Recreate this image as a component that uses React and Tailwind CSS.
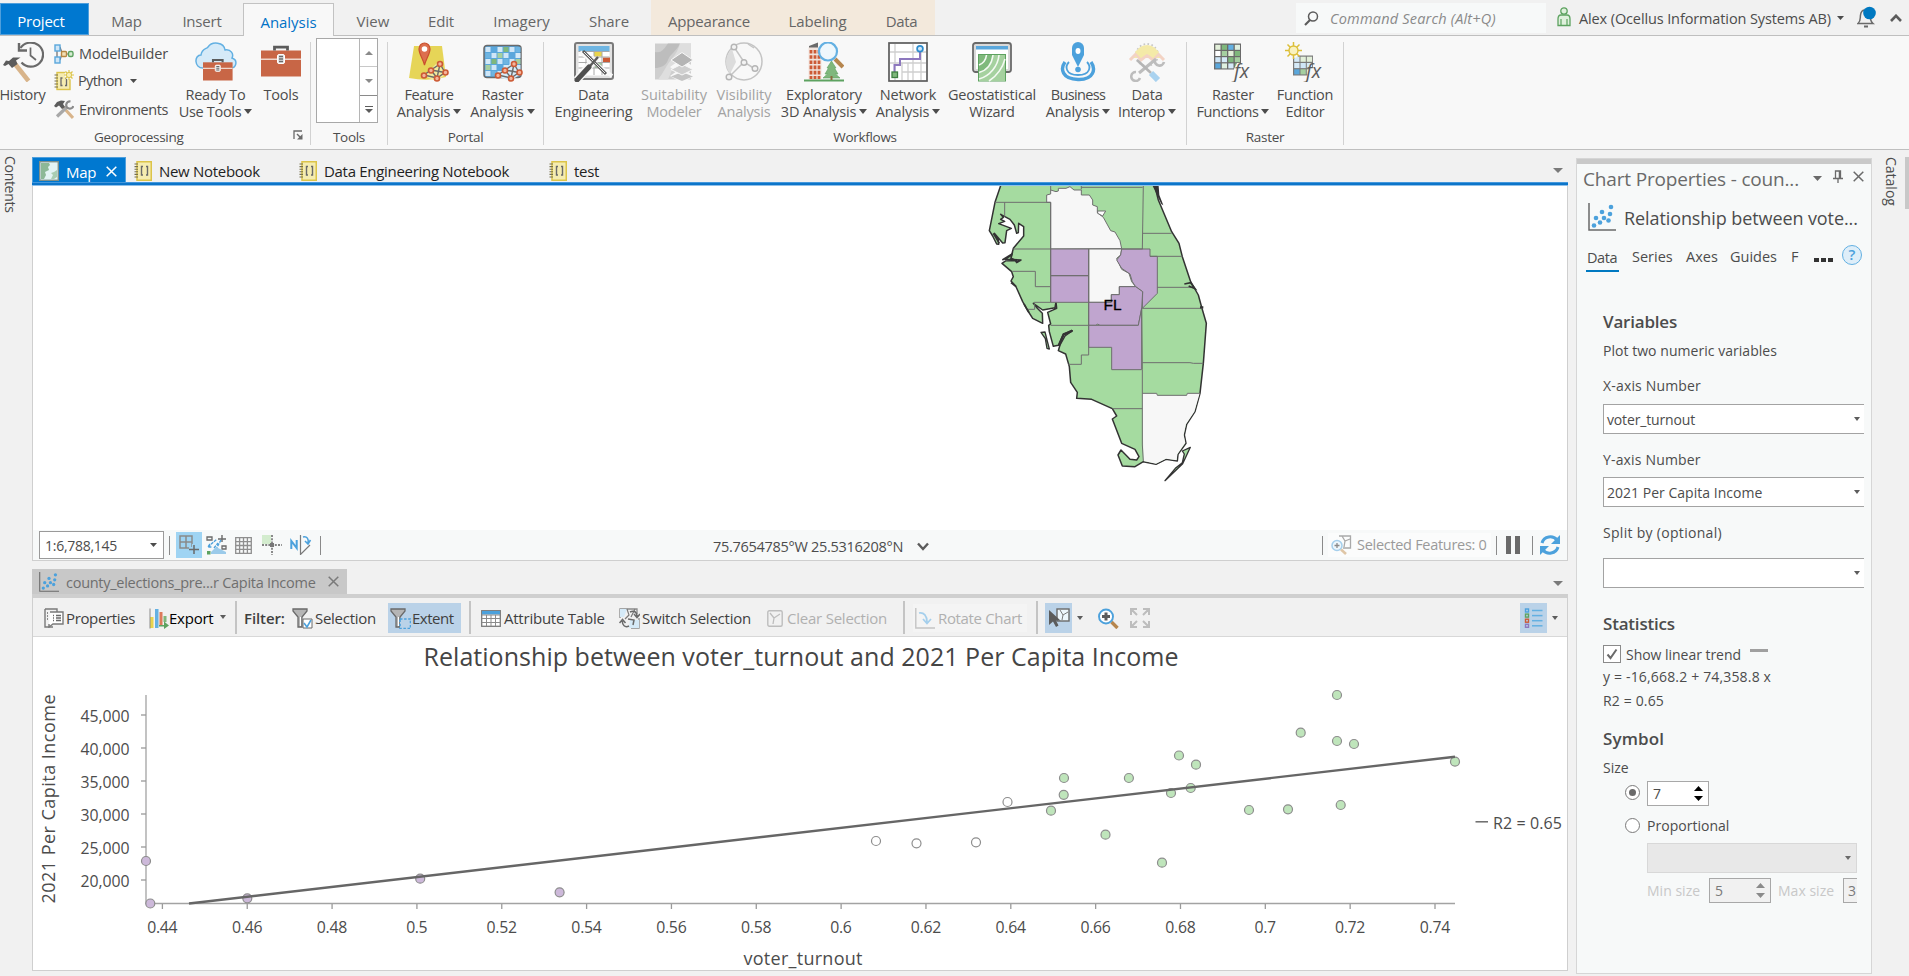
import React from "react";

/* ---------- small shared pieces ---------- */

const Caret = ({ className = "", w = 9, h = 5 }) => (
  <svg className={`inline-block shrink-0 ${className}`} width={w} height={h} viewBox="0 0 10 6" preserveAspectRatio="none" fill="currentColor">
    <path d="M0 0H10L5 6Z" />
  </svg>
);

const CloseX = ({ className = "", size = 11 }) => (
  <svg className={`shrink-0 ${className}`} width={size} height={size} viewBox="0 0 11 11" fill="none" stroke="currentColor" strokeWidth="1.5">
    <path d="M.7.7 10.3 10.3M10.3.7.7 10.3" />
  </svg>
);

const Svg = ({ w, h, children, className = "", vb }) => (
  <svg className={`shrink-0 ${className}`} width={w} height={h} viewBox={vb || `0 0 ${w} ${h}`} fill="none">
    {children}
  </svg>
);

/* ---------- ribbon icons ---------- */

const HistoryIcon = () => (
  <Svg w={42} h={40}>
    <path d="M18.500 6A12.300 12 0 1 1 19.500 20.500" stroke="#6a6a6a" strokeWidth="2.200" />
    <path d="M17 1V8.500H25" stroke="#6a6a6a" strokeWidth="2.400" />
    <path d="M28.500 5.500V13.500L34 18" stroke="#6a6a6a" strokeWidth="1.700" />
    <path d="M11.500 20 26.500 39" stroke="#d8b48a" strokeWidth="4.600" />
    <path d="M1 23 4 18.500 7 19 11 15.500 18.500 15.500 14 18.500 15.500 22 10 26 6.500 22 3 24Z" fill="#5c5c5c" />
  </Svg>
);
const ModelBuilderIcon = () => (
  <Svg w={20} h={20}>
    <path d="M3 7V13M6 3 8 9M6 16 8 10M11 10H15" stroke="#6a6a6a" strokeWidth="1.200" />
    <rect x="1" y="1" width="5" height="6" fill="#cfe6f7" stroke="#5aa7dc" strokeWidth="1.400" />
    <rect x="1" y="13" width="5" height="6" fill="#cfe6f7" stroke="#5aa7dc" strokeWidth="1.400" />
    <rect x="7.500" y="7.500" width="5" height="5" rx="1" fill="#f3dfb4" stroke="#b68742" strokeWidth="1.400" />
    <rect x="14.500" y="7.500" width="4.500" height="5" rx="1.500" fill="#d6edd2" stroke="#5da260" strokeWidth="1.400" />
  </Svg>
);
const NotebookIcon = () => (
  <Svg w={18} h={20}>
    <rect x="3" y="0.750" width="14.250" height="18.500" fill="#f5ecb0" stroke="#dcc44a" strokeWidth="1.500" />
    <path d="M0.500 3H4M0.500 5.600H4M0.500 8.200H4M0.500 10.800H4M0.500 13.400H4M0.500 16H4" stroke="#77704a" strokeWidth="1.100" />
    <path d="M9 5.500H7.500V14H9M12 5.500H13.500V14H12" stroke="#6a6a6a" strokeWidth="1.400" />
  </Svg>
);
const PythonIcon = () => (
  <Svg w={20} h={21}>
    <rect x="3" y="2.500" width="13" height="17" fill="#f5ecb0" stroke="#dcc44a" strokeWidth="1.400" />
    <path d="M0.500 5H4M0.500 8H4M0.500 11H4M0.500 14H4M0.500 17H4" stroke="#77704a" strokeWidth="1.100" />
    <path d="M8.500 8H7V15.500H8.500M11 8H12.500V15.500H11" stroke="#6a6a6a" strokeWidth="1.300" />
    <circle cx="15" cy="5" r="4.600" fill="#f8f8f8" />
    <path d="M15 0V10M10 5H20M11.500 1.500 18.500 8.500M18.500 1.500 11.500 8.500" stroke="#dcc44a" strokeWidth="1.200" />
    <circle cx="15" cy="5" r="2.600" fill="#f7efb8" stroke="#dcc44a" />
  </Svg>
);
const EnvironmentsIcon = () => (
  <Svg w={20} h={19}>
    <path d="M9 7 19 18" stroke="#d8b48a" strokeWidth="3" />
    <path d="M3 16.500 13 7" stroke="#a8a8a8" strokeWidth="3.200" />
    <path d="M16.500 1.500A3.600 3.600 0 1 0 19.300 6" stroke="#8a8a8a" strokeWidth="2.200" />
    <path d="M0 6 3 2 7 0.500 11 1 9 4 11 7 8 9 5 5.500 2 7.500Z" fill="#5c5c5c" />
  </Svg>
);
const Toolbox = () => (
  <>
    <path d="M0 4H40V30H0Z" fill="#c86646" />
    <path d="M0 12.700H16M24 12.700H40" stroke="#efd6cb" strokeWidth="1.500" />
    <path d="M13.500 4V0.700H26.500V4" stroke="#5c5c5c" strokeWidth="2.800" />
    <rect x="16.500" y="8" width="7" height="9" rx="1.500" fill="#e6e6e6" stroke="#fff" />
    <path d="M18 10H22M18 12.500H22M18 15H22" stroke="#6a6a6a" strokeWidth="1.500" />
  </>
);
const ToolboxIcon = () => <Svg w={40} h={40} vb="0 -4.500 40 40"><Toolbox /></Svg>;
const ReadyIcon = () => (
  <Svg w={42} h={40}>
    <path d="M8 26C-1 26-1 13 6 13C7 6 12 7 13 5C17-1 29 0 30 8C36 7 39 12 37 16C43 18 42 27 34 26Z" fill="#d5eaf8" stroke="#63b0e2" strokeWidth="1.500" />
    <g transform="translate(8 17.500) scale(.74 .7)"><Toolbox /></g>
  </Svg>
);
const NetNodes = () => (
  <>
    <path d="M15 33 22 28 31 22 36 30.500 28 36 15 33M22 28 28 36M31 22 28 36M22 28 36 30.500" stroke="#6a6a6a" strokeWidth="1.400" />
    {[[15, 33.500], [22, 28.500], [31, 22], [36.500, 30.500], [28, 36.500]].map(([x, y]) => (
      <circle key={x} cx={x} cy={y} r="2.500" fill="#f4b49b" stroke="#cc5a35" strokeWidth="1.600" />
    ))}
  </>
);
const FeatureIcon = () => (
  <Svg w={40} h={40}>
    <path d="M5 4H33L37 35Q20 40 0 36Z" fill="#e6d557" />
    <path d="M15 34 30 19 38 32 27 39Z" fill="#f3ea9d" />
    <path d="M15.500 23C14 17 10 12 10 7A5.500 6 0 0 1 21 7C21 12 17 17 15.500 23Z" fill="#dd6f4e" stroke="#c9512e" strokeWidth="1.200" />
    <circle cx="15.500" cy="7" r="2.800" fill="#fff" />
    <NetNodes />
  </Svg>
);
const GRID_COLORS = ["#cfe6f7", "#6eb5e2", "#d5eaf8", "#a6cf9f", "#cfe6f7", "#5aa7dc", "#cfe6f7", "#7fb77c"];
const RasterIcon = () => (
  <Svg w={40} h={40}>
    <rect x="1" y="3.500" width="37" height="32" rx="3" fill="#5aa7dc" stroke="#6a6a6a" strokeWidth="1.500" />
    {Array.from({ length: 30 }, (_, i) => (
      <rect key={i} x={2.500 + (i % 6) * 6} y={5 + Math.floor(i / 6) * 6} width="5" height="5" fill={GRID_COLORS[(i * 5 + Math.floor(i / 6) * 3) % 8]} />
    ))}
    <path d="M14 34 30 19 38 32 27 39Z" fill="#d8ecf8" />
    <NetNodes />
  </Svg>
);
const DataEngIcon = () => (
  <Svg w={40} h={40}>
    <rect x="1" y="1" width="38" height="36" rx="2" fill="#e2e2e2" stroke="#7a7a7a" strokeWidth="2" />
    <rect x="4.500" y="4" width="31" height="5.500" fill="#6eb5e2" />
    <rect x="4.500" y="9.500" width="31" height="24" fill="#fff" />
    <rect x="20" y="10" width="8" height="4.500" fill="#e8d44d" />
    <rect x="29" y="15.500" width="7" height="5" fill="#cc5a35" />
    <rect x="21" y="21" width="7" height="5" fill="#9cc79a" />
    <path d="M4.500 9.500H35.500M4.500 15H35.500M4.500 20.500H35.500M4.500 26H35.500M12 9.500V33M20 9.500V33M28 9.500V33" stroke="#a9a9a9" strokeWidth="1" />
    <path d="M3 38 22 16" stroke="#f8f8f8" strokeWidth="8" />
    <path d="M6 10 38 34" stroke="#f8f8f8" strokeWidth="4" />
    <path d="M9 9 32 32" stroke="#5c5c5c" strokeWidth="3" />
    <path d="M10 10 31 31" stroke="#e9e9e9" strokeWidth="1" />
    <path d="M16 24 24 15" stroke="#5c5c5c" strokeWidth="2.400" />
    <path d="M3 38 15 25" stroke="#4f4f4f" strokeWidth="5" strokeLinecap="round" />
  </Svg>
);
const SuitabilityIcon = () => (
  <Svg w={40} h={40}>
    <rect x="1" y="1.500" width="36" height="36" fill="#cfcfcf" />
    <path d="M1 10C8 12 11 5 14 1.500H26C22 10 16 12 14 18C12 24 6 26 1 26Z" fill="#bdbdbd" />
    <path d="M26 1.500H37V18C30 22 22 22 18 28L14 37.500H4C10 30 12 24 17 18C22 12 24 8 26 1.500Z" fill="#dedede" />
    <path d="M28 25.500 40 34 28 41 16 34Z M28 16.500 40 25 28 33 16 25Z" fill="#f8f8f8" />
    <path d="M28 30 39 34.500 28 39 17 34.500Z" fill="#c4c4c4" />
    <path d="M28 22 39 27.500 28 33 17 27.500Z" fill="#cfcfcf" stroke="#f8f8f8" />
    <path d="M28 10.500 39 18 28 25 17 18Z" fill="#b5b5b5" stroke="#f8f8f8" />
  </Svg>
);
const VisibilityIcon = () => (
  <Svg w={40} h={40}>
    <ellipse cx="20" cy="19.500" rx="18" ry="18.500" stroke="#c4c4c4" strokeWidth="1.500" />
    <path d="M2 20C2 15 5 9 8 7L12 20 6 32C3 28 2 24 2 20Z" fill="#dcdcdc" />
    <path d="M10 5 20 20 31 27M20 20 5 35M24 2 30 6" stroke="#c4c4c4" strokeWidth="1.500" />
    {[[10, 5], [20, 20.500], [31, 26.500], [5, 35]].map(([x, y]) => (
      <circle key={x} cx={x} cy={y} r="2.800" fill="#f3f3f3" stroke="#b5b5b5" strokeWidth="1.400" />
    ))}
  </Svg>
);
const ExploratoryIcon = () => (
  <Svg w={40} h={40}>
    <path d="M5 4 14 0.500V6H5Z" fill="#6a6a6a" />
    <rect x="4.500" y="5.500" width="13" height="32" fill="#f1e4dd" />
    <path d="M7 8V37M11 8V37M15 8V37" stroke="#cc5a35" strokeWidth="2.800" strokeDasharray="3.600 1.600" />
    <path d="M0 38.500H40" stroke="#5da260" strokeWidth="2" />
    <path d="M27.500 19 32 26H30.500L34 32H31.500L36 36H19L23.500 32H21L24.500 26H23Z" fill="#7fb77c" stroke="#5da260" strokeWidth=".6" />
    <path d="M27.500 34V38" stroke="#8a6a3e" strokeWidth="2" />
    <path d="M31 17 39 25" stroke="#b6864e" strokeWidth="4" />
    <circle cx="24" cy="9.500" r="9" fill="#eef7fc" stroke="#63b0e2" strokeWidth="2.200" />
  </Svg>
);
const NetworkIcon = () => (
  <Svg w={40} h={40}>
    <rect x="1" y="1" width="38" height="38" fill="#fff" stroke="#5c5c5c" strokeWidth="1.700" />
    <path d="M2 10H38M2 21H38M14 30H38M7 2V38M14 21V38M25 2V38M33 10V38M20 21V38" stroke="#cfcfcf" strokeWidth="1.300" />
    <path d="M6.500 32V23H12V17H32V8" stroke="#8d78be" strokeWidth="2" />
    <rect x="4" y="30" width="5.500" height="5.500" fill="#7fb77c" stroke="#3f7f42" strokeWidth="1.300" />
    <circle cx="32" cy="6.800" r="2.900" fill="#cfe6f7" stroke="#2d8ccd" strokeWidth="1.700" />
  </Svg>
);
const GeostatIcon = () => (
  <Svg w={40} h={40}>
    <rect x="1" y="1" width="38" height="29" rx="2.500" fill="#d9d9d9" stroke="#6a6a6a" strokeWidth="1.800" />
    <rect x="4" y="4" width="32" height="23" fill="#fff" />
    <rect x="4" y="4" width="32" height="3.500" fill="#5aa7dc" />
    <rect x="6.500" y="12.500" width="27" height="26.500" fill="#7fb97c" stroke="#5da260" />
    <path d="M7 39V30C16 28 20 21 21 13H33V39Z" fill="#a5d19f" />
    <path d="M7 23C12 21 14 17 14.500 13M7 30.500C16 28 20 21 21 13M7 37C18 34 26 24 27 13M17 39C25 34 31 25 33 17" stroke="#f4faf3" strokeWidth="1.600" />
  </Svg>
);
const BusinessIcon = () => (
  <Svg w={36} h={40}>
    <path d="M18 25 12 13V6A6 6 0 0 1 24 6V13Z" fill="#4ca1dc" />
    <ellipse cx="18" cy="9" rx="2.500" ry="3" fill="#fff" />
    <circle cx="18" cy="27.500" r="2.800" fill="#4ca1dc" />
    <path d="M9 20C5 24 5 33 18 33S31 24 27 20" stroke="#4ca1dc" strokeWidth="1.800" />
    <path d="M5 20C0 27 2 37 18 37.500S36 27 31 20" stroke="#4ca1dc" strokeWidth="3.400" />
  </Svg>
);
const InteropIcon = () => (
  <Svg w={40} h={40}>
    <circle cx="20" cy="13" r="11" stroke="#c7c7c7" strokeWidth="1.800" strokeDasharray="1.600 2.400" />
    <path d="M9 12A11 9 0 0 1 31 12L34 16H6Z" fill="#f4eaa8" />
    <path d="M3 18 9 12 14 18 20 13 26 18 31 12 37 18" stroke="#f3d3c4" strokeWidth="3" />
    <path d="M9 9 14 14 20 10 26 14 31 9" stroke="#f4eaa8" strokeWidth="3" />
    <path d="M12 31 29 17" stroke="#bdbdbd" strokeWidth="3" />
    <path d="M9 30A4.500 4.500 0 1 0 13 36M28 18A4.500 4.500 0 1 0 37 20" stroke="#bdbdbd" strokeWidth="2.600" />
    <path d="M10 18 24 31" stroke="#b5b5b5" strokeWidth="2.600" />
    <path d="M24 31 31 38" stroke="#a9d2ef" strokeWidth="6" />
  </Svg>
);
const Fx = () => (
  <text x="21" y="36" fontFamily="Open Sans, sans-serif" fontStyle="italic" fontSize="19.500" letterSpacing="-0.300" fill="#5c5c5c">fx</text>
);
const RF_COLORS = ["#e2efd9", "#7fb77c", "#63b0e2", "#dff0e0", "#fff", "#a5cfa0", "#e2efd9", "#7fb77c", "#cfe6f7", "#d5eaf8", "#7fb77c", "#a5cfa0", "#5aa7dc", "#dff0e0", "#d5eaf8", "#7fb77c"];
const RasterFnIcon = () => (
  <Svg w={44} h={40} className="ml-1">
    <rect x="1" y="1.500" width="27" height="26" fill="#6a6a6a" />
    {RF_COLORS.map((c, i) => (
      <rect key={i} x={2.300 + (i % 4) * 6.500} y={2.800 + Math.floor(i / 4) * 6.200} width="5.200" height="5" fill={c} />
    ))}
    <path d="M21 27 24 21H29V28H21Z" fill="#f8f8f8" />
    <Fx />
  </Svg>
);
const FunctionIcon = () => (
  <Svg w={44} h={40} className="ml-1">
    <rect x="8" y="13.500" width="20" height="20" fill="#7a7a7a" />
    {["#d5eaf8", "#e2efd9", "#e2efd9", "#d5eaf8", "#cfe6f7", "#d5eaf8", "#5aa7dc", "#a5cfa0", "#dff0e0"].map((c, i) => (
      <rect key={i} x={9.200 + (i % 3) * 6.300} y={14.700 + Math.floor(i / 3) * 6.300} width="5.300" height="5.100" fill={c} />
    ))}
    <circle cx="8.500" cy="8.500" r="7.500" fill="#f8f8f8" />
    <path d="M8.500 0V17M0 8.500H17M2.500 2.500 14.500 14.500M14.500 2.500 2.500 14.500" stroke="#dcbf3a" strokeWidth="1.500" />
    <circle cx="8.500" cy="8.500" r="4.500" fill="#f9f2c0" stroke="#dcbf3a" strokeWidth="1.400" />
    <path d="M22 34 25 24 30 27V34Z" fill="#f8f8f8" />
    <Fx />
  </Svg>
);

/* ---------- ribbon ---------- */

const Tab = ({ w, children, className = "", t = "tracking-[-0.2px]" }) => (
  <div className={`flex h-8 shrink-0 items-center justify-center pt-[4px] text-[15px] ${t} ${w} ${className}`}>{children}</div>
);

const Big = ({ w, icon, l1, l2, caret, muted }) => (
  <div className={`flex shrink-0 flex-col items-center ${w} ${muted ? "text-[#a3a3a3]" : ""}`}>
    <div className="flex h-10 items-start justify-center">{icon}</div>
    <div className="mt-[4px] text-center leading-[17px] whitespace-nowrap">
      <div>{l1}</div>
      {l2 && <div>{l2}{caret && <Caret className="mb-[3px] ml-[3px] align-baseline" w={8} h={5} />}</div>}
    </div>
  </div>
);

const Group = ({ w, label, children }) => (
  <div className={`flex h-full shrink-0 flex-col border-r border-[#d2d2d2] ${w}`}>
    <div className="flex h-[87px]">{children}</div>
    <div className="pt-[5px] text-center text-[13.500px] leading-[16px] tracking-[-0.300px]">{label}</div>
  </div>
);

const Ribbon = () => (
  <>
    <div className="flex h-9 items-start border-b border-[#bfbfbf] bg-[#f1f1f1] text-[#666]">
      <div className="flex h-9 shrink-0 pt-[3px]">
        <Tab w="w-[89px]" className="border border-[#4f9fdc] bg-[#0078d0] pr-[7px] text-white">Project</Tab>
        <Tab w="w-[75px]">Map</Tab>
        <Tab w="w-[76px]">Insert</Tab>
        <div className="ml-[3px] h-[33px] w-[91px] border border-b-0 border-[#c2c2c2] bg-[#f8f8f8] text-[#0072c6]"><Tab w="w-full" t="tracking-[-0.050px]">Analysis</Tab></div>
        <Tab w="w-[78px]" t="tracking-[0.1px]">View</Tab>
        <Tab w="w-[58px]">Edit</Tab>
        <Tab w="w-[103px]" t="tracking-[0px]">Imagery</Tab>
        <Tab w="w-[72px]" t="tracking-[-0.050px]">Share</Tab>
      </div>
      <div className="ml-[6px] flex h-[35px] w-[284px] shrink-0 bg-[#f3e9dc] pt-[3px]">
        <Tab w="w-[116px]">Appearance</Tab>
        <Tab w="w-[101px]" t="tracking-[-0.1px]">Labeling</Tab>
        <Tab w="w-[67px]" t="tracking-[-0.4px]">Data</Tab>
      </div>
      <div className="mt-[3px] ml-[361px] flex h-[30px] w-[250px] shrink-0 items-center bg-[#f7f9f9] pl-[8px] text-[14.500px] tracking-[0.200px] text-[#8a8a8a] italic">
        <Svg w={15} h={15} className="mr-[11px]">
          <circle cx="9" cy="5.500" r="4.500" stroke="#5c5c5c" strokeWidth="1.500" />
          <path d="M6 9 1 14" stroke="#5c5c5c" strokeWidth="2.200" />
        </Svg>
        <span className="pt-px whitespace-nowrap">Command Search (Alt+Q)</span>
      </div>
      <div className="mt-[3px] ml-[11px] flex h-[30px] items-center text-[14.500px] tracking-[-0.120px] text-[#4c4c4c]">
        <Svg w={14} h={20} className="mb-[2px]">
          <circle cx="7" cy="4" r="3.200" fill="#dff0dc" stroke="#5da260" strokeWidth="1.300" />
          <path d="M1 12Q1 8 4 8H10Q13 8 13 12V18.500H1Z" fill="#dff0dc" stroke="#5da260" strokeWidth="1.300" />
          <path d="M4 12V18M10 12V18" stroke="#5da260" strokeWidth="1.200" />
        </Svg>
        <span className="ml-[8px] w-[258px] shrink-0 pt-px whitespace-nowrap">Alex (Ocellus Information Systems AB)</span>
        <Caret w={7} h={4} />
        <Svg w={20} h={22} className="mb-[2px] ml-[13px]">
          <path d="M1 17.500C4 15 3 12 3.500 9C4 5 6 4 8 4S12.500 5 13 9C13.300 12 13 15 16 17.500Z" stroke="#6a6a6a" strokeWidth="1.500" />
          <path d="M7 20.500H11" stroke="#6a6a6a" strokeWidth="2" />
          <circle cx="12.500" cy="7" r="6.300" fill="#0079c1" />
        </Svg>
        <Svg w={12} h={8} className="ml-[13px]"><path d="M1 7 6 1.800 11 7" stroke="#5c5c5c" strokeWidth="2.600" /></Svg>
      </div>
    </div>

    <div className="h-[114px] shrink-0 border-b border-[#bfbfbf] bg-[#f8f8f8] text-[14.500px] tracking-[-0.200px]">
      <div className="flex h-[109px] pt-[6px]">
        <Group w="w-[311px]" label={
          <div className="flex items-center pl-[94px] whitespace-nowrap">
            <span className="w-[199px] text-left">Geoprocessing</span>
            <Svg w={10} h={10} className="mb-[4px]"><path d="M1 9V1H9" stroke="#6a6a6a" strokeWidth="1.300" /><path d="M4 4 8 8" stroke="#6a6a6a" strokeWidth="1.500" /><path d="M9.500 4V9.500H4Z" fill="#6a6a6a" /></Svg>
          </div>
        }>
          <Big w="w-[45px]" icon={<HistoryIcon />} l1={<span className="tracking-[-0.330px]">History</span>} />
          <div className="ml-[9px] flex w-[121px] shrink-0 flex-col whitespace-nowrap">
            <div className="flex h-[23px] items-center gap-[5px]"><ModelBuilderIcon /><span className="tracking-[-0.160px]">ModelBuilder</span></div>
            <div className="flex h-[31px] items-center gap-[4px]"><PythonIcon /><span className="tracking-[-0.600px]">Python</span><Caret className="ml-[4px]" w={7} h={4} /></div>
            <div className="flex h-[27px] items-center gap-[5px]"><EnvironmentsIcon /><span className="tracking-[-0.400px]">Environments</span></div>
          </div>
          <Big w="w-[81px]" icon={<ReadyIcon />} l1="Ready To" l2={<span className="tracking-[-0.300px]">Use Tools</span>} caret />
          <Big w="w-[50px]" icon={<ToolboxIcon />} l1="Tools" />
        </Group>
        <Group w="w-[77px]" label="Tools">
          <div className="-mt-[4px] ml-[5px] flex h-[85px] w-[62px] border border-[#a8a8a8] bg-white">
            <div className="w-[43px] border-r border-[#b5b5b5]" />
            <div className="flex flex-1 flex-col text-[#8a8a8a]">
              <div className="flex h-[28px] items-center justify-center border-b border-[#c8c8c8]"><Caret className="rotate-180" w={8} h={4} /></div>
              <div className="flex h-[28px] items-center justify-center"><Caret w={8} h={4} /></div>
              <div className="flex flex-1 flex-col items-center justify-center gap-[2px] border-t border-[#8a8a8a] text-[#5c5c5c]"><div className="h-px w-[8px] bg-[#5c5c5c]" /><Caret w={8} h={4} /></div>
            </div>
          </div>
        </Group>
        <Group w="w-[156px]" label="Portal">
          <div className="w-[2px]" />
          <Big w="w-[78px]" icon={<FeatureIcon />} l1={<span className="tracking-[-0.400px]">Feature</span>} l2={<span className="tracking-[-0.130px]">Analysis</span>} caret />
          <Big w="w-[69px]" icon={<RasterIcon />} l1="Raster" l2={<span className="tracking-[-0.130px]">Analysis</span>} caret />
        </Group>
        <Group w="w-[643px]" label="Workflows">
          <div className="w-[3px]" />
          <Big w="w-[93px]" icon={<DataEngIcon />} l1="Data" l2="Engineering" />
          <Big w="w-[68px]" icon={<SuitabilityIcon />} l1={<span className="tracking-[0px]">Suitability</span>} l2="Modeler" muted />
          <Big w="w-[72px]" icon={<VisibilityIcon />} l1={<span className="tracking-[-0.020px]">Visibility</span>} l2="Analysis" muted />
          <Big w="w-[88px]" icon={<ExploratoryIcon />} l1="Exploratory" l2={<span className="tracking-[-0.150px]">3D Analysis</span>} caret />
          <Big w="w-[80px]" icon={<NetworkIcon />} l1="Network" l2={<span className="tracking-[-0.130px]">Analysis</span>} caret />
          <Big w="w-[88px]" icon={<GeostatIcon />} l1="Geostatistical" l2="Wizard" />
          <Big w="w-[84px]" icon={<BusinessIcon />} l1={<span className="tracking-[-0.650px]">Business</span>} l2={<span className="tracking-[-0.130px]">Analysis</span>} caret />
          <Big w="w-[54px]" icon={<InteropIcon />} l1="Data" l2={<span className="tracking-[-0.400px]">Interop</span>} caret />
        </Group>
        <Group w="w-[157px]" label="Raster">
          <div className="w-[3px]" />
          <Big w="w-[86px]" icon={<RasterFnIcon />} l1="Raster" l2={<span className="tracking-[-0.400px]">Functions</span>} caret />
          <Big w="w-[58px]" icon={<FunctionIcon />} l1={<span className="tracking-[-0.300px]">Function</span>} l2="Editor" />
        </Group>
      </div>
    </div>
  </>
);

/* ---------- map ---------- */

const G = "#a5dba0";
const P = "#c0a5cf";
const W = "#f7f7f7";

const MapCanvas = () => (
  <Svg w={1534} h={344} vb="33 186 1534 344">
    <g transform="translate(950 180) scale(.33333)">
      <path fill={G} stroke="#333" strokeWidth="4.500" strokeLinejoin="round" d="M155 8 135 67 118 152 128 168 140 192 146 193 145 182 133 160 158 189 165 188 170 152 184 145 146 131 164 124 152 118 160 112 152 103 180 118 193 135 200 160 205 158 206 130 221 140 221 168 190 205 185 225 165 238 213 240 200 248 196 242 168 242 156 250 185 275 190 290 183 303 197 318 218 365 232 390 248 415 278 430 277 400 262 385 250 370 278 390 315 383 318 366 320 385 293 397 302 432 296 436 298 455 310 499 325 496 340 462 367 452 345 468 330 495 325 512 347 522 358 560 362 607 382 637 380 655 425 658 487 686 500 708 487 717 515 790 555 808 567 830 560 840 540 838 513 810 504 825 517 858 555 860 580 845 618 853 648 838 682 843 684 823 708 790 703 765 710 733 735 695 750 640 760 550 769 430 755 382 745 345 722 305 697 230 687 190 665 155 625 60 612 8Z" />
      <g stroke="#6e6e6e" strokeWidth="3" strokeLinejoin="round">
        <path fill={W} d="M302 67H290V45L302 42V30L318 35 325 33V25H348L360 20 372 30H394V45H418L428 60V75L442 80V98L460 112 482 152 495 156 510 182 515 206 302 207Z" />
        <path fill="#fff" d="M443 93H467L458 108 443 100Z" />
        <path fill={W} d="M416 207H515L512 225 500 235 515 268 537 280 545 305 557 320H508V344H484V367H416Z" />
        <path fill={P} d="M302 207H416V287H302ZM302 287H416V367H302Z" />
        <path fill={P} d="M515 207H600V229H622V340L577 385 578 335 557 320 547 305 540 282 515 265 500 240 512 225Z" />
        <path fill={P} d="M416 367H484V344H508V320H557L578 335 575 385 565 436H450L442 432 438 436H416Z" />
        <path fill={P} d="M416 436H565L575 385V569H485V502H416Z" />
        <path fill={W} stroke="none" d="M577 640H620L622 646H710L712 640H749L733 695 708 733 701 765 706 788 682 823 680 841 648 836 618 851 580 843Z" />
        <path fill="none" d="M135 67H302V207M164 67V110M190 207H302M187 274H256V320H302V207M302 320V367H252M232 388H254V372M302 436H416M416 207V525H394V553H355M487 686H577M575 385 577 569V795L580 843M577 385H757M577 548H720L730 550H760M577 640H620L622 646H710L712 640H750M622 322H728M600 229H697M578 160H665M580 15 577 207M394 22H578M302 15V30M515 207H578M394 28V15" />
      </g>
      <path fill="#333" d="M608 18H626L628 45 640 76 634 72Z" />
      <path stroke="#333" strokeWidth="5" d="M703 312 722 308 735 326 716 318M157 240 186 222 183 235 205 245M130 160 148 190M183 308 198 320M222 372 237 398" />
      <path stroke="#333" strokeWidth="7" d="M327 497 341 464 367 452M750 382H760" />
      <path fill={G} stroke="#333" strokeWidth="4" strokeLinejoin="round" d="M645 902 676 865 697 848 703 822 697 813 721 802 698 851ZM273 457 285 456 291 480 298 507 291 505 286 476Z" />
    </g>
    <text x="1103.500" y="309.500" fontFamily="Liberation Sans, sans-serif" fontSize="15.500" stroke="#000" strokeWidth=".3" fill="#000">FL</text>
  </Svg>
);

/* ---------- chart ---------- */

const POINTS = [
  ["#cdb9da", [[146, 861], [150.300, 903.500], [247.300, 898.300], [420.200, 878.700], [559.600, 892.300]]],
  ["#ffffff", [[876, 841], [916.500, 843.300], [976, 842.300], [1007.500, 802]]],
  ["#bfe5bb", [[1051, 810.700], [1064, 778], [1063.700, 794.800], [1105.500, 834.700], [1128.900, 778], [1162, 862.700], [1179, 755.500], [1196, 764.700], [1171, 793], [1190.700, 788], [1249, 810], [1288, 809.300], [1340.700, 805], [1337, 695], [1300.700, 732.700], [1337, 741], [1354, 744], [1455, 761.700]]],
];
const X_LABELS = ["0.44", "0.46", "0.48", "0.5", "0.52", "0.54", "0.56", "0.58", "0.6", "0.62", "0.64", "0.66", "0.68", "0.7", "0.72", "0.74"];
const Y_LABELS = ["45,000", "40,000", "35,000", "30,000", "25,000", "20,000"];

const Chart = () => (
  <Svg w={1534} h={333} vb="33 637 1534 333">
    <g fill="#4c4c4c">
      <text x="801" y="666" textAnchor="middle" fontSize="25" textLength="755" fill="#454545">Relationship between voter_turnout and 2021 Per Capita Income</text>
      <text x="803" y="964.500" textAnchor="middle" fontSize="18" textLength="119">voter_turnout</text>
      <text transform="translate(54.500 799) rotate(-90)" textAnchor="middle" fontSize="18" textLength="209">2021 Per Capita Income</text>
      <text x="1493" y="829" fontSize="16" textLength="69">R2 = 0.65</text>
      {Y_LABELS.map((l, i) => (
        <text key={l} x="129.500" y={721.500 + i * 33} textAnchor="end" fontSize="15.800" textLength="49">{l}</text>
      ))}
      {X_LABELS.map((l, i) => (
        <text key={l} x={162.400 + i * 84.840} y="933.300" textAnchor="middle" fontSize="15.800" textLength={l.length === 4 ? 30.500 : 21.500}>{l}</text>
      ))}
    </g>
    <g stroke="#9a9a9a" strokeWidth="1.300">
      <path d="M146 695V903.500H1455" stroke="#a3a3a3" />
      {Y_LABELS.map((l, i) => <path key={l} d={`M141 ${715 + i * 33}h5`} />)}
      {X_LABELS.map((l, i) => <path key={l} d={`M${162.400 + i * 84.840} 904v5`} />)}
    </g>
    {POINTS.map(([fill, pts]) =>
      pts.map(([x, y]) => <circle key={`${x}-${y}`} cx={x} cy={y} r="4.500" fill={fill} stroke="#8d8d8d" strokeWidth="1.200" />)
    )}
    <path d="M189 903.500 1455 756.700" stroke="#666" strokeWidth="2.400" />
    <path d="M1475.500 821.800H1488" stroke="#6a6a6a" strokeWidth="1.500" />
  </Svg>
);

/* ---------- document tabs, status bar, chart toolbar ---------- */

const ScatterIcon = ({ size = 20 }) => (
  <Svg w={size} h={size} vb="0 0 28 28">
    <path d="M1 0V27H28" stroke="#6a6a6a" strokeWidth="1.500" />
    {[[6, 22.500], [8, 15], [12, 19.500], [14, 9], [16, 15], [20.500, 17.500], [22, 11], [23, 4]].map(([x, y]) => (
      <circle key={x} cx={x} cy={y} r="2.300" fill="#4ca1dc" />
    ))}
  </Svg>
);

const DocTabs = () => (
  <div className="flex h-[32px] shrink-0 items-end pt-[7px] text-[15px] tracking-[-0.300px] whitespace-nowrap text-[#1f1f1f]">
    <div className="flex h-[25px] w-[94px] items-center border border-b-0 border-[#4f9fdc] bg-[#0078d0] pt-[2px] pl-[6px] text-white">
      <Svg w={20} h={20}>
        <rect x=".7" y=".7" width="18.600" height="18.600" fill="#e3f3f4" stroke="#7d8f8a" strokeWidth="1.400" />
        <path d="M2 2H10L11 4 9 6 10 9 6 11 7 14 5 18H2Z" fill="#8cb897" />
        <path d="M18 9V16L15 18H12L14 14 12 12 15 11Z" fill="#a9cdb2" />
      </Svg>
      <span className="ml-[7px] w-[40px] pt-[2px]">Map</span>
      <CloseX />
    </div>
    <div className="flex h-[25px] items-center pt-[2px]">
      <div className="ml-[8px] flex w-[165px] items-center gap-[7px]"><NotebookIcon /><span className="pt-[2px]">New Notebook</span></div>
      <div className="flex w-[250px] items-center gap-[7px]"><NotebookIcon /><span className="pt-[2px]">Data Engineering Notebook</span></div>
      <div className="flex w-[1004px] items-center gap-[7px]"><NotebookIcon /><span className="pt-[2px]">test</span></div>
      <Caret className="text-[#7a7a7a]" w={10} h={5} />
    </div>
  </div>
);

const Bar = ({ className = "" }) => <div className={`h-[19px] w-px shrink-0 bg-[#8a8a8a] ${className}`} />;

const StatusBar = () => (
  <div className="flex h-[30px] items-center bg-[#f7f9f9] pl-[6px] text-[14.500px] tracking-[-0.290px] whitespace-nowrap">
    <div className="flex h-[28px] w-[125px] shrink-0 items-center justify-between border border-[#9a9a9a] bg-white pr-[6px] pl-[5px] text-[14px] tracking-[-0.270px]">1:6,788,145<Caret w={7} h={4} /></div>
    <Bar className="ml-[5px]" />
    <div className="ml-[6px] flex h-[26px] w-[26px] items-center justify-center bg-[#9fd4f3]">
      <Svg w={20} h={20}><path d="M1 1H13V13H1ZM7 1V13M1 7H13" stroke="#8a8a8a" strokeWidth="1.500" /><path d="M10 14H20M15 9V19" stroke="#9fd4f3" strokeWidth="4" /><path d="M10 14.500H20M15 10V19" stroke="#6a6a6a" strokeWidth="1.500" /></Svg>
    </div>
    <Svg w={21} h={20} className="ml-[4px]">
      <path d="M1 2H6V5H1ZM16 11H20V14H16Z" stroke="#6a6a6a" strokeWidth="1.300" /><path d="M12 4H20M16 0V7" stroke="#6a6a6a" strokeWidth="1.400" />
      <path d="M2 12 11 4M4 9 2 12H6M8 13 12 8M15 5 10 14" stroke="#4ca1dc" strokeWidth="1.400" strokeDasharray="3 1" />
      <path d="M5 17 10 12 20 17V19H5Z" fill="#9bcbea" /><rect x="1" y="16" width="3.500" height="3.500" fill="#5da260" />
    </Svg>
    <Svg w={17} h={17} className="ml-[8px]"><path d="M.7.7H16.300V16.300H.7ZM4.600 1V16M8.500 1V16M12.400 1V16M1 4.600H16M1 8.500H16M1 12.400H16" stroke="#8f8f8f" strokeWidth="1.300" /></Svg>
    <Svg w={20} h={20} className="ml-[10px]"><rect width="9" height="9" fill="#d3ecce" /><path d="M0 10H20M10 0V20" stroke="#5c5c5c" strokeWidth="1.400" strokeDasharray="2 1.200" /><rect x="8" y="8" width="4" height="4" fill="#777" /></Svg>
    <Svg w={22} h={20} className="ml-[8px]">
      <path d="M1.300 14V6L6.700 13V5" stroke="#4ca1dc" strokeWidth="2" /><path d="M10.500 0V19.500L20 10" stroke="#7a7a7a" strokeWidth="1.200" />
      <path d="M13 2C17 1 19 4 18 8M15 6 18 9 20.500 5" stroke="#4ca1dc" strokeWidth="1.600" />
    </Svg>
    <Bar className="ml-[8px]" />
    <div className="ml-[392px] w-[204px] shrink-0 pt-[3px]">75.7654785°W 25.5316208°N</div>
    <Svg w={12} h={9} className="mt-[2px]"><path d="M1 1.500 6 7 11 1.500" stroke="#5c5c5c" strokeWidth="2.400" /></Svg>
    <Bar className="ml-[393px]" />
    <div className="ml-[5px] flex h-[24px] w-[163px] shrink-0 items-center bg-[#fbfcfc] pl-[3px] text-[#9a9a9a]">
      <Svg w={21} h={20}>
        <path d="M8 1H19.500V13H12M11 1 14 6 19 4M14 6 13 12" stroke="#a9a9a9" strokeWidth="1.300" />
        <circle cx="6" cy="10.500" r="5" fill="#eef7fc" stroke="#a5cfec" strokeWidth="1.500" /><path d="M3.500 10.500H8.500M6 8V13" stroke="#8a8a8a" strokeWidth="1.300" /><path d="M10 14.500 15 19" stroke="#dfc6a6" strokeWidth="2.600" />
      </Svg>
      <span className="ml-[5px]">Selected Features: 0</span>
    </div>
    <Bar className="ml-[5px]" />
    <div className="ml-[9px] flex h-[18px] shrink-0 gap-[4px]"><div className="w-[5px] bg-[#6a6a6a]" /><div className="w-[5px] bg-[#6a6a6a]" /></div>
    <Bar className="ml-[12px]" />
    <Svg w={20} h={20} className="ml-[7px]">
      <path d="M2 8C4 1 13 0 17 5" stroke="#4ca1dc" strokeWidth="3" /><path d="M20 0V9H11Z" fill="#4ca1dc" />
      <path d="M18 12C16 19 7 20 3 15" stroke="#4ca1dc" strokeWidth="3" /><path d="M0 20V11H9Z" fill="#4ca1dc" />
    </Svg>
  </div>
);

const ToolSep = ({ className = "" }) => <div className={`mb-[2px] h-[33px] w-[2px] shrink-0 bg-[#c4c4c4] ${className}`} />;

const Funnel = ({ children }) => (
  <Svg w={21} h={21}>
    <path d="M1 1H15V3L10 9V19H6V9L1 3Z" fill="#b5b5b5" stroke="#6a6a6a" strokeWidth="1.300" />
    <path d="M8 9H9V18H8Z" fill="#fff" />
    {children}
  </Svg>
);

const ChartToolbar = () => (
  <div className="flex h-[39px] items-center border-b border-[#d8d8d8] bg-[#f1f1f1] pt-[2px] pl-[11px] text-[15px] tracking-[-0.230px] whitespace-nowrap text-[#3f3f3f]">
    <Svg w={20} h={20}>
      <path d="M1 1H13V4M1 1V19H9" stroke="#7a7a7a" strokeWidth="1.400" /><path d="M6 4H19V16H9L5 19V16" fill="#fff" stroke="#7a7a7a" strokeWidth="1.400" />
      <path d="M3 5H4M3 8H4M3 11H4M9 7.500H10M12 7.500H17M9 10H10M12 10H17M9 12.500H10M12 12.500H17" stroke="#6a6a6a" strokeWidth="1.300" />
    </Svg>
    <span className="ml-[2px] w-[83px] tracking-[-0.360px]">Properties</span>
    <Svg w={20} h={21}>
      <rect x="1" y="9" width="3.500" height="11" fill="#e8d44d" /><rect x="6" y="1" width="3.500" height="19" fill="#63b0e2" />
      <rect x="10.500" y="4" width="3" height="13" fill="#dd7a5b" /><rect x="14.500" y="8" width="3" height="6" fill="#7fb77c" />
      <path d="M1 .5V20.500" stroke="#8a8a8a" /><path d="M10 17H15V13.500L20 17.500 15 21V18.500H10Z" fill="#5da260" />
    </Svg>
    <span className="w-[51px] text-black">Export</span>
    <Caret className="mb-[2px] text-[#5c5c5c]" w={6} h={4} />
    <ToolSep className="ml-[9px]" />
    <span className="ml-[7px] w-[48px] font-semibold tracking-[-0.100px]">Filter:</span>
    <Funnel><path d="M11 11H20V20H11Z" fill="#fff" stroke="#6a6a6a" /><path d="M12 15 15 19 19 12" stroke="#4ca1dc" strokeWidth="1.600" /></Funnel>
    <span className="ml-[2px] w-[73px] tracking-[-0.270px]">Selection</span>
    <div className="flex h-[30px] w-[73px] items-center bg-[#bad2e8] pl-[2px]">
      <Funnel><path d="M10 11H20.500V20.500H10Z" fill="#bad2e8" stroke="#4ca1dc" strokeWidth="1.600" strokeDasharray="2.500 1.600" /></Funnel>
      <span className="ml-[1px] tracking-[-0.480px]">Extent</span>
    </div>
    <ToolSep className="ml-[8px]" />
    <Svg w={20} h={17} className="ml-[10px]"><rect x=".7" y=".7" width="18.600" height="15.600" fill="#fff" stroke="#7a7a7a" strokeWidth="1.300" /><rect x="1" y="1" width="18" height="3.500" fill="#4ca1dc" /><path d="M1 5H19M1 8.500H19M1 12.500H19M5.500 5V16M10 5V16M14.500 5V16" stroke="#8a8a8a" /></Svg>
    <span className="ml-[3px] w-[115px]">Attribute Table</span>
    <Svg w={21} h={21}>
      <path d="M1 10V1H18V6M12 20H20V10" stroke="#8a8a8a" strokeWidth="1.300" /><path d="M1 1H8L5 9H1ZM11 12H20V20H10Z" fill="#d5eaf8" />
      <path d="M8 1 10 7 6 11M16 1 12 9" stroke="#7a7a7a" strokeWidth="1.200" />
      <path d="M11 4C15 2 18 4 18 8M15 6 18 9.500 21 6M10 18C6 20 3 17 3.500 13M0.500 15 3.500 11.500 6.500 15M9 11 15 12 14 17" stroke="#6a6a6a" strokeWidth="1.500" />
    </Svg>
    <span className="ml-[2px] w-[125px]">Switch Selection</span>
    <div className="flex items-center text-[#b0b0b0]">
      <Svg w={16} h={17}><rect x=".8" y=".8" width="14.400" height="15.400" rx="1.500" stroke="#bdbdbd" strokeWidth="1.400" /><path d="M3 3 7 8 6 14M7 8 13 4" stroke="#bdbdbd" strokeWidth="1.300" /></Svg>
      <span className="ml-[4px] w-[116px]">Clear Selection</span>
    </div>
    <ToolSep />
    <div className="ml-[8px] flex h-[28px] w-[114px] items-center bg-[#f4f4f4] pl-[2px] text-[#b0b0b0]">
      <Svg w={21} h={21}><path d="M.8 0V20H20" stroke="#c4c4c4" strokeWidth="1.400" /><path d="M4 5C9 4 12 8 12 14M8 11 12 15.500 16 11" stroke="#a5cfec" strokeWidth="1.700" /></Svg>
      <span className="ml-[2px] tracking-[-0.340px]">Rotate Chart</span>
    </div>
    <ToolSep className="ml-[9px]" />
    <div className="ml-[7px] flex h-[30px] w-[27px] items-center justify-center bg-[#bad2e8]">
      <Svg w={22} h={20}><rect x="9" y="1" width="12" height="12" fill="#eef7fc" stroke="#6a6a6a" strokeWidth="1.400" /><path d="M12 2 15 7 20 4M15 7 14 12" stroke="#7a7a7a" /><path d="M1 2V17L5 13.500 8 19 10.500 17.500 8 12.500H12.500Z" fill="#5c5c5c" /></Svg>
    </div>
    <Caret className="ml-[5px] text-[#5c5c5c]" w={6} h={4} />
    <Svg w={21} h={21} className="ml-[15px]"><path d="M13.500 14 19.500 20" stroke="#b6864e" strokeWidth="3.400" /><circle cx="8" cy="8.500" r="7" fill="#fff" stroke="#4ca1dc" strokeWidth="1.900" /><path d="M8 4.500V12.500M4 8.500H12" stroke="#5c5c5c" strokeWidth="3" /></Svg>
    <Svg w={20} h={20} className="ml-[11px]"><path d="M1 7V1H7M1 1 7 7M13 1H19V7M19 1 13 7M1 13V19H7M1 19 7 13M13 19H19V13M19 19 13 13" stroke="#bdbdbd" strokeWidth="2" /></Svg>
    <div className="ml-[370px] flex h-[30px] w-[27px] items-center justify-center bg-[#bad2e8]">
      <Svg w={20} h={20}>
        {["#4ca1dc", "#5da260", "#cc5a35", "#8d78be"].map((c, i) => (
          <g key={c}><rect x="1.500" y={1 + i * 5.100} width="3" height="3" stroke={c} strokeWidth="1.400" /><path d={`M8 ${2.500 + i * 5.100}H18.500`} stroke="#63b0e2" strokeWidth="1.500" /></g>
        ))}
      </Svg>
    </div>
    <Caret className="ml-[5px] text-[#5c5c5c]" w={6} h={4} />
  </div>
);

/* ---------- chart properties pane ---------- */

const Combo = ({ children }) => (
  <div className="flex h-[30px] w-[261px] items-center justify-between border border-r-0 border-[#a3a3a3] bg-white pr-[4px] pl-[3px]">
    <span>{children}</span><Caret className="text-[#5c5c5c]" w={6} h={4} />
  </div>
);

const Spinner = ({ children, w, disabled }) => (
  <div className={`flex h-[25px] shrink-0 items-center justify-between border border-[#a8a8a8] pr-[5px] pl-[5px] ${w} ${disabled ? "bg-[#f1f1f1] text-[#7a7a7a]" : "bg-white"}`}>
    {children}
    <div className={`flex flex-col gap-[5px] ${disabled ? "text-[#8a8a8a]" : "text-black"}`}><Caret className="rotate-180" w={9} h={5} /><Caret w={9} h={5} /></div>
  </div>
);

const Radio = ({ on }) => (
  <div className="flex h-[15px] w-[15px] items-center justify-center rounded-full border border-[#7a7a7a] bg-white">{on && <div className="h-[7px] w-[7px] rounded-full bg-[#6a6a6a]" />}</div>
);

const Pane = () => (
  <div className="mt-[8px] ml-[8px] flex h-[816px] w-[296px] shrink-0 flex-col border border-[#d6d6d6] bg-[#f7f9f9] text-[14px] tracking-[0.020px] whitespace-nowrap">
    <div className="h-[5px] shrink-0 bg-[#c9c9c9]" />
    <div className="flex h-[32px] shrink-0 items-center pl-[6px] text-[#6a6a6a]">
      <span className="w-[230px] shrink-0 pb-[2px] text-[19px] tracking-[-0.170px]">Chart Properties - coun...</span>
      <Caret w={9} h={5} className="mb-[4px]" />
      <Svg w={10} h={13} className="mb-[8px] ml-[11px]"><path d="M2.500 8V1H7.500V8M0 8.500H10M5 8.500V13" stroke="#6a6a6a" strokeWidth="1.300" /><path d="M6.500 1V8" stroke="#6a6a6a" strokeWidth="1.500" /></Svg>
      <CloseX className="mb-[8px] ml-[10px]" />
    </div>
    <div className="mt-[4px] flex h-[34px] shrink-0 items-center pl-[11px]">
      <ScatterIcon size={28} />
      <span className="ml-[8px] pt-[2px] text-[18px] tracking-[-0.090px]">Relationship between vote...</span>
    </div>
    <div className="mt-[11px] flex h-[27px] shrink-0 items-center pl-[9px] text-[14.500px] tracking-[0px]">
      <div className="h-[27px] w-[33px] shrink-0 border-b-2 border-[#0079c1] pt-[2px] pl-[1px] font-medium tracking-[-0.400px]">Data</div>
      <span className="mb-[3px] ml-[13px] w-[54px]">Series</span>
      <span className="mb-[3px] w-[44px]">Axes</span>
      <span className="mb-[3px] w-[61px]">Guides</span>
      <span className="mb-[3px] w-[23px]">F</span>
      <div className="mt-[3px] flex gap-[2px]">{[0, 1, 2].map((i) => <div key={i} className="h-[4px] w-[5px] bg-[#333]" />)}</div>
      <div className="mb-[8px] ml-[9px] flex h-[20px] w-[20px] items-center justify-center rounded-full border-[1.500px] border-[#63b0e2] bg-[#deeef9] text-[15px] font-semibold text-[#4ca1dc]">?</div>
    </div>

    <div className="flex flex-col pl-[26px]">
      <h3 className="mt-[37px] text-[17px] leading-[26px] font-semibold tracking-[-0.200px]">Variables</h3>
      <p className="mt-[6px] leading-[20px] tracking-[0.040px]">Plot two numeric variables</p>
      <p className="mt-[15px] mb-[8px] leading-[20px] tracking-[0.170px]">X-axis Number</p>
      <Combo><span className="tracking-[-0.150px]">voter_turnout</span></Combo>
      <p className="mt-[16px] mb-[7px] leading-[20px] tracking-[0.170px]">Y-axis Number</p>
      <Combo>2021 Per Capita Income</Combo>
      <p className="mt-[16px] mb-[15px] leading-[20px] tracking-[0.300px]">Split by (optional)</p>
      <Combo />
      <h3 className="mt-[23px] text-[17px] leading-[26px] font-semibold tracking-[-0.200px]">Statistics</h3>
      <div className="mt-[8px] flex h-[18px] items-center">
        <div className="flex h-[18px] w-[18px] items-center justify-center border border-[#8a8a8a] bg-white">
          <Svg w={12} h={12}><path d="M1.500 6.500 4.500 10 10.500 1.500" stroke="#6a6a6a" strokeWidth="2" /></Svg>
        </div>
        <span className="ml-[5px] w-[124px] shrink-0 tracking-[-0.030px]">Show linear trend</span>
        <div className="mb-[8px] h-[3px] w-[18px] bg-[#a0a0a0]" />
      </div>
      <p className="mt-[4px] leading-[20px] tracking-[0.170px]">y = -16,668.2 + 74,358.8 x</p>
      <p className="mt-[4px] leading-[20px] tracking-[0.150px]">R2 = 0.65</p>
      <h3 className="mt-[15px] text-[17px] leading-[26px] font-semibold tracking-[0.110px]">Symbol</h3>
      <p className="mt-[6px] leading-[20px]">Size</p>
      <div className="mt-[3px] flex h-[25px] items-center pl-[22px]"><div className="mb-[2px]"><Radio on /></div><div className="ml-[7px]"><Spinner w="w-[62px]">7</Spinner></div></div>
      <div className="mt-[8px] flex h-[22px] items-center pl-[22px]"><Radio /><span className="ml-[7px]">Proportional</span></div>
      <div className="mt-[7px] ml-[44px] flex h-[30px] w-[210px] items-center justify-end border border-[#d8d8d8] bg-[#e8e8e8] pr-[5px]"><Caret className="text-[#6a6a6a]" w={6} h={4} /></div>
      <div className="mt-[5px] ml-[44px] flex h-[25px] w-[210px] items-center text-[#c8c8c8]">
        <span className="w-[62px] shrink-0">Min size</span>
        <Spinner w="w-[62px]" disabled>5</Spinner>
        <span className="ml-[7px] w-[65px] shrink-0">Max size</span>
        <div className="flex h-[25px] w-[14px] items-center border border-r-0 border-[#a8a8a8] bg-[#f1f1f1] pl-[4px] text-[#7a7a7a]">3</div>
      </div>
    </div>
  </div>
);

export default function App() {
  return (
    <div className="flex h-[976px] w-[1909px] flex-col overflow-hidden bg-[#f1f1f1] font-['Open_Sans',sans-serif] text-[#4c4c4c]">
      <Ribbon />
      <div className="flex min-h-0 flex-1">
        <div className="flex w-[32px] shrink-0">
          <div className="pt-[6px] text-[14px] leading-[20px] tracking-[-0.300px] [writing-mode:vertical-rl]">Contents</div>
        </div>
        <div className="flex w-[1536px] shrink-0 flex-col">
          <DocTabs />
          <div className="h-[4px] shrink-0 border-y border-t-[#4497dc] border-b-[#8fc0ea] bg-[#0c75c9]" />
          <div className="border border-t-0 border-[#cfcfcf] bg-white">
            <MapCanvas />
            <StatusBar />
          </div>
          <div className="mt-[8px] flex h-[25px] shrink-0 items-center justify-between pr-[5px] text-[14.500px] whitespace-nowrap">
            <div className="flex h-[25px] w-[315px] items-center bg-[#c8c8c8] pl-[7px] text-[#6f6f6f]">
              <ScatterIcon size={20} />
              <span className="ml-[7px] w-[262px] shrink-0 pt-[3px] tracking-[-0.270px]">county_elections_pre...r Capita Income</span>
              <CloseX className="text-[#7a7a7a]" />
            </div>
            <Caret className="mt-[3px] text-[#7a7a7a]" w={10} h={5} />
          </div>
          <div className="h-[4px] shrink-0 bg-[#cfcfcf]" />
          <div className="border border-t-0 border-[#cfcfcf] bg-white">
            <ChartToolbar />
            <Chart />
          </div>
        </div>
        <Pane />
        <div className="flex w-[37px] justify-between">
          <div className="pt-[7px] pl-[9px] text-[14px] leading-[20px] [writing-mode:vertical-rl]">Catalog</div>
          <div className="mt-[7px] h-[52px] w-[4px] bg-[#c8c8c8]" />
        </div>
      </div>
    </div>
  );
}
